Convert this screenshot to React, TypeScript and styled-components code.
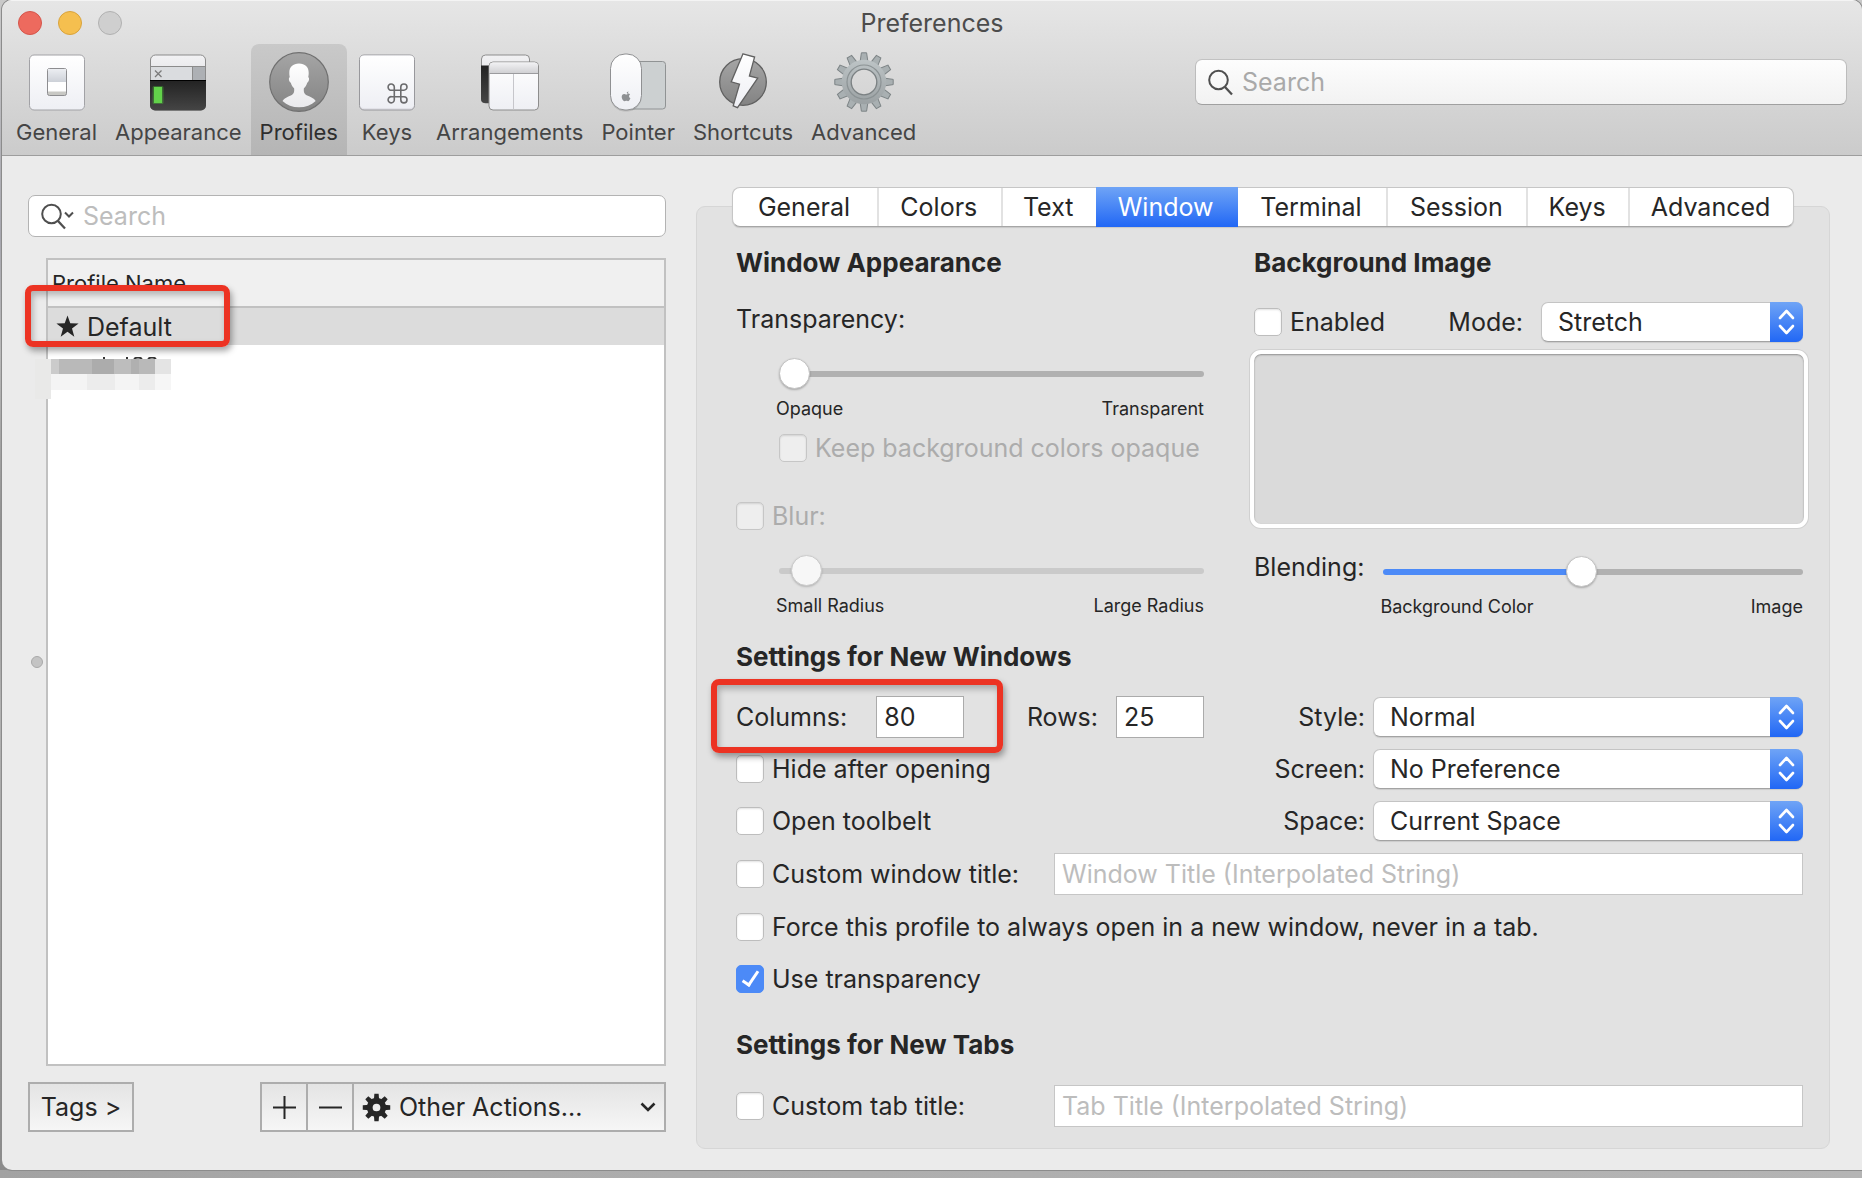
import React, { useId, useState } from "react";
import styled, { createGlobalStyle, css } from "styled-components";

const color = {
  text: "#262626",
  muted: "#acacac",
  placeholder: "#bdbdbd",
  blue: "#4c8af7",
  red: "#ec3323",
  line: "#c1c1c1",
};
const font = { heading: "26px", base: "25px", tool: "22px", small: "18px" };
const blueFill = "linear-gradient(#6fa4f6, #2167f5)";

const GlobalStyle = createGlobalStyle`
  *, *::before, *::after { box-sizing: border-box; }
  body {
    margin: 0;
    background: #acacac;
    color: ${color.text};
    font-family: Inter, Roboto, "Liberation Sans", sans-serif;
    font-size: ${font.base};
    line-height: 30px;
  }
  button, input, select { font: inherit; color: inherit; margin: 0; }
`;

/* ---------- window frame ---------- */

const Desktop = styled.div`
  min-height: 100vh;
  display: flex;
  padding: 0 0 8px 2px;
  background:
    linear-gradient(90deg, #a2a2a2, #acacac 28%, #b4b4b4) bottom / 100% 8px no-repeat,
    linear-gradient(#c9c9c9, #a6a6ae 20%, #b9b9b9 30%, #8f8f8f 45%, #b2b2b2 60%, #8a8a8a);
`;

const PreferencesWindow = styled.main`
  flex: 1;
  display: flex;
  flex-direction: column;
  background: #ebebeb;
  border-radius: 10px 10px 0 10px;
  box-shadow: 0 0 0 1px #8c8c8c;
  overflow: hidden;
`;

const Header = styled.header`
  background: linear-gradient(#e6e6e6, #cbcbcb);
  border-top: 1px solid #f4f4f4;
  border-bottom: 1px solid #9d9d9d;
`;

const TitleBar = styled.div`
  display: grid;
  grid-template-columns: 1fr auto 1fr;
  align-items: center;
  height: 43px;
  padding: 0 16px;
`;

const Lights = styled.div`
  display: flex;
  gap: 16px;
`;

const Light = styled.button<{ $fill: string; $edge: string }>`
  width: 24px;
  height: 24px;
  padding: 0;
  border: 1px solid ${(p) => p.$edge};
  border-radius: 50%;
  background: ${(p) => p.$fill};
`;

const Title = styled.h1`
  margin: 0;
  font-size: ${font.base};
  font-weight: 400;
  color: #4c4c4c;
`;

const Toolbar = styled.div`
  display: flex;
  justify-content: space-between;
  gap: 24px;
  height: 111px;
  padding: 0 15px 0 5px;
`;

const Tools = styled.nav`
  display: flex;
`;

const Tool = styled.button<{ $active?: boolean }>`
  display: flex;
  flex-direction: column;
  align-items: center;
  gap: 6px;
  min-width: 80px;
  padding: 8px 9px 0;
  border: 0;
  border-radius: 8px 8px 0 0;
  background: ${(p) => (p.$active ? "linear-gradient(#c9c9c9, #b5b5b5)" : "none")};
  color: ${(p) => (p.$active ? "#2e2e2e" : "#454545")};
  font-size: ${font.tool};
  line-height: 28px;

  svg {
    width: 60px;
    height: 60px;
    flex: none;
  }
`;

const SearchBox = styled.label<{ $toolbar?: boolean }>`
  display: flex;
  align-items: center;
  gap: 8px;
  height: 42px;
  padding: 0 12px;
  border: 1px solid #b3b3b3;
  border-radius: 7px;
  background: #fff;

  ${(p) =>
    p.$toolbar &&
    css`
      flex: 0 1 652px;
      height: 46px;
      margin-top: 15px;
      border-color: #c2c2c2 #bcbcbc #a0a0a0;
      background: linear-gradient(#fdfdfd, #f2f2f2);
    `}

  svg {
    flex: none;
  }
  input {
    flex: 1;
    min-width: 0;
    padding: 0;
    border: 0;
    outline: 0;
    background: none;
  }
  input::placeholder {
    color: ${(p) => (p.$toolbar ? "#a9a9a9" : color.placeholder)};
    opacity: 1;
  }
`;

const Body = styled.div`
  flex: 1;
  display: flex;
  gap: 30px;
  padding: 31px 32px 21px 26px;
`;

/* ---------- profile list ---------- */

const Sidebar = styled.aside`
  flex: 0 0 638px;
  display: flex;
  flex-direction: column;
  padding: 8px 0 17px;
`;

const ListArea = styled.div`
  flex: 1;
  display: flex;
  align-items: stretch;
  gap: 3px;
  margin: 21px 0 16px;
`;

const Splitter = styled.div`
  display: flex;
  align-items: center;
  padding-left: 3px;

  &::before {
    content: "";
    width: 12px;
    height: 12px;
    border-radius: 50%;
    border: 1px solid #a9a9a9;
    background: #c4c4c4;
  }
`;

const ListFrame = styled.div`
  position: relative;
  flex: 1;
  border: 2px solid ${color.line};
  background: #fff;
`;

const ProfileTable = styled.table`
  width: 100%;
  border-collapse: collapse;

  th {
    height: 47px;
    padding: 0 4px;
    border-bottom: 2px solid ${color.line};
    background: #f0f0f0;
    font-size: ${font.tool};
    font-weight: 400;
    text-align: left;
  }
  td {
    height: 38px;
    padding: 0 8px;
  }
`;

const ProfileRow = styled.tr<{ $selected?: boolean }>`
  background: ${(p) => (p.$selected ? "#dcdcdc" : "none")};
`;

const ProfileName = styled.span`
  display: flex;
  align-items: center;
  gap: 8px;
`;

const RedactedCell = styled.td`
  position: relative;

  svg {
    position: absolute;
    left: -13px;
    top: 12px;
  }
`;

const Highlight = styled.span`
  position: absolute;
  border: 6px solid ${color.red};
  border-radius: 8px;
  box-shadow: 2px 4px 6px rgba(0, 0, 0, 0.35), inset 2px 4px 6px rgba(0, 0, 0, 0.25);
  pointer-events: none;
`;

const ProfileHighlight = styled(Highlight)`
  left: -23px;
  top: 25px;
  width: 205px;
  height: 62px;
`;

const ColumnsHighlight = styled(Highlight)`
  inset: -17px -39px -15px -25px;
`;

const ListActions = styled.div`
  display: flex;
  justify-content: space-between;
`;

const ButtonGroup = styled.div`
  display: flex;
`;

const SquareButton = styled.button<{ $width: number }>`
  display: flex;
  align-items: center;
  justify-content: center;
  gap: 8px;
  width: ${(p) => p.$width}px;
  height: 50px;
  padding: 0 8px;
  border: 2px solid #adadad;
  background: linear-gradient(#e4e4e4, #f6f6f6);
  white-space: nowrap;

  & + & {
    margin-left: -2px;
  }
`;

const Grow = styled.span`
  flex: 1;
  text-align: left;
`;

/* ---------- settings pane ---------- */

const Pane = styled.section`
  flex: 1;
  min-width: 0;
  display: flex;
  flex-direction: column;
`;

const Tabs = styled.div`
  position: relative;
  display: grid;
  grid-template-columns: 144fr 124fr 95fr 142fr 149fr 140fr 102fr 165fr;
  height: 40px;
  margin: 0 36px;
  border: 1px solid #c6c6c6;
  border-bottom-color: #a6a6a6;
  border-radius: 8px;
  background: #fff;
  box-shadow: 0 1px 1px rgba(0, 0, 0, 0.12);
`;

const Tab = styled.button<{ $active?: boolean }>`
  padding: 0 2px 0 0;
  border: 0;
  border-left: 2px solid #e2e2e2;
  background: none;

  &:first-child {
    border-left: 0;
  }
  ${(p) =>
    p.$active &&
    css`
      margin: -1px 0;
      border-left: 0;
      background: ${blueFill};
      color: #fff;

      & + button {
        border-left: 0;
      }
    `}
`;

const Panel = styled.div`
  flex: 1;
  margin-top: -21px;
  padding: 41px 26px 20px 39px;
  border: 1px solid #d6d6d6;
  border-radius: 9px;
  background: #e2e2e2;
`;

const Columns = styled.div`
  display: grid;
  grid-template-columns: 468fr 549fr;
  column-gap: 50px;
`;

const Stack = styled.div`
  display: flex;
  flex-direction: column;
`;

const Heading = styled.h2`
  margin: 0;
  font-size: ${font.heading};
  font-weight: 700;
`;

const FieldLabel = styled.label`
  white-space: nowrap;
`;

const TransparencyLabel = styled(FieldLabel)`
  margin-top: 26px;
`;

const Indented = styled.div`
  display: grid;
  gap: 12px;
  margin: 24px 0 38px 43px;
`;

const BlurRadius = styled.div`
  margin: 24px 0 24px 43px;
`;

const SliderBlock = styled.div`
  flex: 1;
  display: grid;
  gap: 7px;
`;

const SliderEnds = styled.div`
  display: flex;
  justify-content: space-between;
  margin-left: -3px;
  font-size: ${font.small};
  line-height: 24px;
`;

const Range = styled.input<{ $filled?: boolean }>`
  appearance: none;
  width: auto;
  height: 32px;
  margin: 0;
  background: none;
  opacity: ${(p) => (p.disabled ? 0.75 : 1)};

  &::-webkit-slider-runnable-track {
    height: 6px;
    border-radius: 3px;
    background: ${(p) =>
      p.$filled
        ? `linear-gradient(90deg, ${color.blue} var(--fill), #b1b1b1 var(--fill))`
        : p.disabled
          ? "#c2c2c2"
          : "#b1b1b1"};
  }
  &::-webkit-slider-thumb {
    appearance: none;
    width: 31px;
    height: 31px;
    margin-top: -13px;
    border: 1px solid #c4c4c4;
    border-radius: 50%;
    background: #fff;
    box-shadow: 0 1px 2px rgba(0, 0, 0, 0.25);
  }
`;

const CheckLabel = styled.label<{ $dim?: boolean }>`
  display: flex;
  align-items: center;
  gap: 8px;
  white-space: nowrap;
  color: ${(p) => (p.$dim ? color.muted : "inherit")};
`;

const Box = styled.input`
  appearance: none;
  display: grid;
  place-items: center;
  flex: none;
  width: 28px;
  height: 28px;
  border: 1px solid #bdbdbd;
  border-radius: 5px;
  background: #fff;
  box-shadow: inset 0 1px 2px rgba(0, 0, 0, 0.12);

  &:disabled {
    background: #eeeeee;
    border-color: #c6c6c6;
  }
  &:checked {
    border-color: ${color.blue};
    background: ${color.blue};
    box-shadow: none;
  }
  &:checked::after {
    content: "";
    width: 9px;
    height: 18px;
    margin-bottom: 4px;
    border: solid #fff;
    border-width: 0 3px 3px 0;
    transform: rotate(34deg);
  }
`;

const BackgroundRow = styled.div`
  display: flex;
  align-items: center;
  gap: 18px;
  margin-top: 24px;
`;

const ModeLabel = styled(FieldLabel)`
  margin-left: auto;
`;

const SelectFrame = styled.span<{ $width?: number }>`
  display: grid;
  height: 40px;
  ${(p) => (p.$width ? `width: ${p.$width}px;` : "flex: 1;")}

  select {
    grid-area: 1 / 1;
    appearance: none;
    min-width: 0;
    padding: 0 40px 0 16px;
    border: 1px solid #c4c4c4;
    border-bottom-color: #a3a3a3;
    border-radius: 7px;
    background: #fff;
    box-shadow: 0 1px 1px rgba(0, 0, 0, 0.1);
  }
`;

const SelectCap = styled.span`
  grid-area: 1 / 1;
  z-index: 1;
  justify-self: end;
  display: grid;
  place-items: center;
  width: 33px;
  border-radius: 0 7px 7px 0;
  background: ${blueFill};
  pointer-events: none;
`;

const ImageWell = styled.div`
  height: 178px;
  margin: 8px -5px 24px -4px;
  border: 4px solid #fff;
  border-radius: 11px;
  background: #dadada;
  box-shadow: 0 0 0 1px #d0d0d0, inset 0 1px 2px rgba(0, 0, 0, 0.35);
`;

const BlendingRow = styled.div`
  display: flex;
  gap: 19px;
  padding-top: 4px;

  label {
    margin-top: -4px;
  }
`;

const Rows = styled.div`
  display: flex;
  flex-direction: column;
  gap: 10px;
`;

const Row = styled.div<{ $between?: boolean }>`
  display: flex;
  align-items: center;
  justify-content: ${(p) => (p.$between ? "space-between" : "flex-start")};
  min-height: 42px;
`;

const TitleRow = styled.div`
  display: grid;
  grid-template-columns: 318px 1fr;
  align-items: center;
  min-height: 44px;
`;

const WindowSettings = styled(Rows)`
  margin: 24px 0 30px;
`;

const TabSettings = styled(Rows)`
  margin-top: 24px;
`;

const SizeField = styled.div<{ $gap: number }>`
  position: relative;
  display: flex;
  align-items: center;
  gap: ${(p) => p.$gap}px;
`;

const TextInput = styled.input<{ $narrow?: boolean }>`
  width: ${(p) => (p.$narrow ? "88px" : "100%")};
  height: 42px;
  padding: 0 7px;
  border: 1px solid ${(p) => (p.$narrow ? "#ababab" : "#c6c6c6")};
  border-radius: 0;
  outline: 0;
  background: #fff;

  &::placeholder {
    color: ${color.placeholder};
    opacity: 1;
  }
`;

const PopupRow = styled.div`
  display: grid;
  grid-template-columns: 111px 1fr;
  align-items: center;
  column-gap: 8px;
  min-height: 42px;

  label {
    text-align: right;
  }
`;

/* ---------- drawings ---------- */

const GeneralIcon = () => (
  <svg viewBox="0 0 60 60" aria-hidden="true">
    <defs>
      <linearGradient id="key" x2="0" y2="1">
        <stop offset="0" stopColor="#fff" />
        <stop offset="1" stopColor="#eeeff4" />
      </linearGradient>
      <linearGradient id="rocker" x2="0" y2="1">
        <stop offset="0" stopColor="#eceef2" />
        <stop offset="1" stopColor="#cdd1d8" />
      </linearGradient>
    </defs>
    <rect x="2.5" y="3" width="55" height="55" rx="4.5" fill="url(#key)" stroke="#a2a2a6" />
    <rect x="20.5" y="16.500" width="19" height="27" rx="2" fill="#c8c8c4" stroke="#8d8d90" />
    <path d="M21 17h18v13H21z" fill="url(#rocker)" />
    <path d="M21 30h18v9.500H21z" fill="#fff" />
  </svg>
);

const AppearanceIcon = () => (
  <svg viewBox="0 0 60 60" aria-hidden="true">
    <defs>
      <linearGradient id="bar" x2="0" y2="1">
        <stop offset="0" stopColor="#f2f2f4" />
        <stop offset="1" stopColor="#cfcfd2" />
      </linearGradient>
      <linearGradient id="screen" x2="0" y2="1">
        <stop offset="0" stopColor="#222" />
        <stop offset="1" stopColor="#454545" />
      </linearGradient>
    </defs>
    <rect x="2.500" y="3" width="55" height="55" rx="5" fill="url(#bar)" stroke="#8b8b8b" />
    <path d="M3 14.500h41.500v14H3z" fill="#dadcdf" />
    <path d="M44.500 14.500H57v14H44.500z" fill="#adb0b4" />
    <path d="M3 14.500h54M44.500 14.500v14" stroke="#8b8b8b" />
    <path d="M2 28h56v25.500a5 5 0 0 1-5 5H7a5 5 0 0 1-5-5z" fill="url(#screen)" />
    <path d="M2 28.500h56" stroke="#000" />
    <path d="M7 18.500l6.500 6.500M13.500 18.500L7 25" stroke="#7a7a7a" strokeWidth="1.300" />
    <rect x="4.500" y="34" width="11" height="18" rx="1.500" fill="#4fd33a" opacity=".35" />
    <rect x="6" y="35" width="8" height="16" fill="#62d24a" />
  </svg>
);

const ProfilesIcon = () => (
  <svg viewBox="0 0 60 60" aria-hidden="true">
    <defs>
      <linearGradient id="disc" x2="0" y2="1">
        <stop offset="0" stopColor="#a5a5a5" />
        <stop offset="1" stopColor="#838383" />
      </linearGradient>
      <linearGradient id="bust" x2="0" y2="1">
        <stop offset="0" stopColor="#fff" />
        <stop offset="1" stopColor="#e9e9ec" />
      </linearGradient>
    </defs>
    <circle cx="30" cy="30" r="29.300" fill="url(#disc)" stroke="#707070" strokeWidth="1.200" />
    <path
      d="M30 11.500c-6 0-9.700 3.500-9.700 9.200 0 2 .2 3.300.5 4.600-1.600.2-.9 4.800 1 5.400.7 2.500 1.800 4.300 3.300 5.600.4 3.700-.2 5.700-3.300 7.300-3.300 1.600-6.400 2.500-8.300 5.400 4.400 4.200 10 6.300 16.500 6.300s12.300-2.100 16.700-6.300c-1.900-2.900-5.200-3.800-8.500-5.400-3.100-1.600-3.700-3.600-3.300-7.300 1.500-1.300 2.600-3.100 3.300-5.600 1.900-.6 2.600-5.200 1-5.400.3-1.300.5-2.600.5-4.600 0-5.700-3.700-9.200-9.700-9.200z"
      fill="url(#bust)"
    />
  </svg>
);

const KeysIcon = () => (
  <svg viewBox="0 0 60 60" aria-hidden="true">
    <rect x="2.500" y="3" width="55" height="55" rx="4.500" fill="#e2e2e8" stroke="#98989c" />
    <rect x="3" y="3.500" width="54" height="52.500" rx="4" fill="url(#key)" />
    <path
      d="M37.300 38.200h6.500v6.500h-6.500zM37.300 38.200h-2.700a3.100 3.100 0 1 1 2.700-3.100zM43.800 38.200v-3.100a3.100 3.100 0 1 1 3.100 3.100zM43.800 44.700h3.100a3.100 3.100 0 1 1-3.100 3.100zM37.300 44.700v3.100a3.100 3.100 0 1 1-2.700-3.100z"
      fill="none"
      stroke="#6b6b6d"
      strokeWidth="1.600"
    />
  </svg>
);

const ArrangementsIcon = () => (
  <svg viewBox="0 0 60 60" aria-hidden="true">
    <rect x="1.500" y="3" width="48" height="48" rx="4" fill="url(#bar)" stroke="#8d8d8d" />
    <path d="M1 13.500h20V51H5a4 4 0 0 1-4-4z" fill="url(#screen)" />
    <rect x="9" y="10" width="49.500" height="48" rx="4" fill="url(#key)" stroke="#8d8d8d" />
    <path d="M9.500 21.500V14a3.500 3.500 0 0 1 3.500-3.500h41.500A3.500 3.500 0 0 1 58 14v7.500z" fill="url(#bar)" />
    <path d="M9.500 21.500H58" stroke="#9b9b9e" />
    <path d="M33.500 22v35.500" stroke="#c6c6cb" />
  </svg>
);

const PointerIcon = () => (
  <svg viewBox="0 0 60 60" aria-hidden="true">
    <rect x="18" y="9.500" width="39.500" height="47.500" rx="3" fill="#ccd0d1" stroke="#909394" />
    <rect x="2.500" y="2.500" width="31" height="57" rx="14.500" fill="#000" opacity=".12" />
    <rect x="2.500" y="2" width="31" height="56" rx="14.500" fill="url(#key)" stroke="#8f9092" />
    <path
      d="M20.300 43.600c.2-.9-.2-1.700-.7-2.300.7 0 1.300-.3 1.700-1 .2.700-.2 1.700-.8 2.200 1.300-.1 2.200.4 2.500 1-1.400.9-1.200 3.100.4 3.700-.5 1.500-1.500 3-2.400 3-.7 0-1-.4-1.800-.4s-1.100.4-1.800.4c-1.500-.1-3-3-2.600-5.100.4-2 2-2.500 3.200-1.900.8.300 1.300.3 2.300.4z"
      transform="translate(-1 -1)"
      fill="#8e9093"
    />
  </svg>
);

const ShortcutsIcon = () => (
  <svg viewBox="0 0 60 60" aria-hidden="true">
    <circle cx="30" cy="30" r="23.300" fill="url(#disc)" stroke="#606060" strokeWidth="1.300" />
    <path
      d="M30 1.800L41.600 5l-5.200 19 8.300 2.200L24.500 55.600l-4.300-1.700 6.300-21.800-8.300-2.200z"
      fill="url(#key)"
      stroke="#616161"
      strokeWidth="1.300"
      strokeLinejoin="miter"
    />
  </svg>
);

const spokes = (count: number) => Array.from({ length: count }, (_, i) => (360 / count) * i);

const AdvancedIcon = () => (
  <svg viewBox="0 0 60 60" aria-hidden="true">
    <defs>
      <linearGradient id="steel" gradientUnits="userSpaceOnUse" x1="0" y1="0" x2="0" y2="60">
        <stop offset="0" stopColor="#c3cacc" />
        <stop offset="1" stopColor="#959b9d" />
      </linearGradient>
    </defs>
    {spokes(12).map((angle) => (
      <path
        key={angle}
        d="M26 10.500L27.400 .8h5.200L34 10.500z"
        transform={`rotate(${angle} 30 30)`}
        fill="#a9b0b2"
        stroke="#7d8486"
      />
    ))}
    <circle cx="30" cy="30" r="17.500" fill="none" stroke="url(#steel)" strokeWidth="9.500" />
    <circle cx="30" cy="30" r="17" fill="none" stroke="#8b9294" strokeWidth="1.200" />
    <circle cx="30" cy="30" r="12.800" fill="none" stroke="#7b8183" strokeWidth="1.300" />
  </svg>
);

const Magnifier = ({ menu = false }: { menu?: boolean }) => (
  <svg width={menu ? 34 : 26} height="28" viewBox={menu ? "0 0 34 28" : "0 0 26 28"} fill="none" stroke="#4f4f4f" strokeWidth="2" aria-hidden="true">
    <circle cx="10.500" cy="12" r="9.300" />
    <path d="M17 19l7 7.500" strokeWidth="2.300" />
    {menu && <path d="M24 10.500l4 4 4-4" />}
  </svg>
);

const Star = () => (
  <svg width="23" height="23" viewBox="0 0 24 24" fill={color.text} aria-hidden="true">
    <path d="M12 .5l2.900 8.200 8.700.2-6.900 5.300 2.400 8.400L12 17.600l-7.100 5 2.400-8.400L.4 8.900l8.700-.2z" />
  </svg>
);

const blocks: [number, number, number, number, string][] = [
  [0, 2, 16, 40, "#e9e9e8"],
  [16, 2, 8, 15, "#cbcbcb"],
  [24, 2, 33, 15, "#b9b9b9"],
  [57, 2, 22, 15, "#acacac"],
  [79, 2, 17, 15, "#bdbdbd"],
  [96, 2, 8, 15, "#b0b0b0"],
  [104, 2, 16, 15, "#b9b9b9"],
  [120, 2, 16, 15, "#e4e4e4"],
  [16, 17, 36, 16, "#f4f4f4"],
  [52, 17, 28, 16, "#ececec"],
  [80, 17, 24, 16, "#f4f4f4"],
  [104, 17, 16, 16, "#ececec"],
  [120, 17, 16, 16, "#f6f6f6"],
];

const Mosaic = () => (
  <svg width="136" height="44" viewBox="0 0 136 44" role="img" aria-label="Redacted profile">
    <path d="M69 0v2M92 0v2M99 2q4-3 8 0M113 2q4-3 8 0" fill="none" stroke="#333" strokeWidth="2" />
    {blocks.map(([x, y, w, h, fill]) => (
      <rect key={`${x}-${y}`} x={x} y={y} width={w} height={h} fill={fill} />
    ))}
  </svg>
);

const SmallGear = () => (
  <svg width="29" height="29" viewBox="0 0 30 30" fill={color.text} aria-hidden="true">
    {spokes(8).map((angle) => (
      <path key={angle} d="M12.200 8L12.800 .8h4.400L17.800 8z" transform={`rotate(${angle} 15 15)`} />
    ))}
    <circle cx="15" cy="15" r="7" fill="none" stroke={color.text} strokeWidth="6" />
  </svg>
);

const Plus = () => (
  <svg width="23" height="23" viewBox="0 0 23 23" stroke={color.text} strokeWidth="2" aria-hidden="true">
    <path d="M0 11.500h23M11.500 0v23" />
  </svg>
);

const Minus = () => (
  <svg width="23" height="23" viewBox="0 0 23 23" stroke={color.text} strokeWidth="2" aria-hidden="true">
    <path d="M0 11.500h23" />
  </svg>
);

const ChevronDown = () => (
  <svg width="16" height="10" viewBox="0 0 16 10" fill="none" stroke={color.text} strokeWidth="2.600" aria-hidden="true">
    <path d="M1.500 1.500L8 8l6.500-6.500" />
  </svg>
);

const UpDown = () => (
  <svg width="17" height="26" viewBox="0 0 17 26" fill="none" stroke="#fff" strokeWidth="2.600" strokeLinecap="round" strokeLinejoin="round" aria-hidden="true">
    <path d="M2 9l6.500-7L15 9M2 17l6.500 7L15 17" />
  </svg>
);

/* ---------- controls ---------- */

type CheckProps = { label: string; checked?: boolean; disabled?: boolean };

const Check = ({ label, checked = false, disabled }: CheckProps) => {
  const [on, setOn] = useState(checked);
  return (
    <CheckLabel $dim={disabled}>
      <Box type="checkbox" checked={on} disabled={disabled} onChange={() => setOn(!on)} />
      {label}
    </CheckLabel>
  );
};

type SliderProps = {
  id?: string;
  name?: string;
  low: string;
  high: string;
  start: number;
  filled?: boolean;
  disabled?: boolean;
};

const Slider = ({ id, name, low, high, start, filled, disabled }: SliderProps) => {
  const [value, setValue] = useState(start);
  return (
    <SliderBlock>
      <Range
        id={id}
        aria-label={name}
        type="range"
        value={value}
        disabled={disabled}
        $filled={filled}
        style={{ "--fill": `${value}%` } as React.CSSProperties}
        onChange={(e) => setValue(Number(e.target.value))}
      />
      <SliderEnds>
        <span>{low}</span>
        <span>{high}</span>
      </SliderEnds>
    </SliderBlock>
  );
};

const Select = ({ id, option, width }: { id: string; option: string; width?: number }) => (
  <SelectFrame $width={width}>
    <select id={id}>
      <option>{option}</option>
    </select>
    <SelectCap>
      <UpDown />
    </SelectCap>
  </SelectFrame>
);

const Popup = ({ label, option }: { label: string; option: string }) => {
  const id = useId();
  return (
    <PopupRow>
      <FieldLabel htmlFor={id}>{label}</FieldLabel>
      <Select id={id} option={option} />
    </PopupRow>
  );
};

const tools = [
  { label: "General", Icon: GeneralIcon },
  { label: "Appearance", Icon: AppearanceIcon },
  { label: "Profiles", Icon: ProfilesIcon },
  { label: "Keys", Icon: KeysIcon },
  { label: "Arrangements", Icon: ArrangementsIcon },
  { label: "Pointer", Icon: PointerIcon },
  { label: "Shortcuts", Icon: ShortcutsIcon },
  { label: "Advanced", Icon: AdvancedIcon },
];

const tabs = ["General", "Colors", "Text", "Window", "Terminal", "Session", "Keys", "Advanced"];

export default function App() {
  return (
    <>
      <GlobalStyle />
      <Desktop>
        <PreferencesWindow>
          <Header>
            <TitleBar>
              <Lights>
                <Light aria-label="Close" $fill="#ed6a5e" $edge="#d5554b" />
                <Light aria-label="Minimize" $fill="#f5bf4f" $edge="#d9a33c" />
                <Light aria-label="Zoom" $fill="#cfcfcf" $edge="#b1b1b1" />
              </Lights>
              <Title>Preferences</Title>
            </TitleBar>
            <Toolbar>
              <Tools>
                {tools.map(({ label, Icon }) => (
                  <Tool key={label} $active={label === "Profiles"}>
                    <Icon />
                    {label}
                  </Tool>
                ))}
              </Tools>
              <SearchBox $toolbar>
                <Magnifier />
                <input type="text" placeholder="Search" aria-label="Search preferences" />
              </SearchBox>
            </Toolbar>
          </Header>

          <Body>
            <Sidebar>
              <SearchBox>
                <Magnifier menu />
                <input type="text" placeholder="Search" aria-label="Search profiles" />
              </SearchBox>
              <ListArea>
                <Splitter />
                <ListFrame>
                  <ProfileTable>
                    <thead>
                      <tr>
                        <th scope="col">Profile Name</th>
                      </tr>
                    </thead>
                    <tbody>
                      <ProfileRow $selected>
                        <td>
                          <ProfileName>
                            <Star />
                            Default
                          </ProfileName>
                        </td>
                      </ProfileRow>
                      <ProfileRow>
                        <RedactedCell>
                          <Mosaic />
                        </RedactedCell>
                      </ProfileRow>
                    </tbody>
                  </ProfileTable>
                  <ProfileHighlight />
                </ListFrame>
              </ListArea>
              <ListActions>
                <SquareButton $width={106}>Tags &gt;</SquareButton>
                <ButtonGroup>
                  <SquareButton $width={48} aria-label="Add profile">
                    <Plus />
                  </SquareButton>
                  <SquareButton $width={48} aria-label="Remove profile">
                    <Minus />
                  </SquareButton>
                  <SquareButton $width={314} aria-haspopup="menu">
                    <SmallGear />
                    <Grow>Other Actions...</Grow>
                    <ChevronDown />
                  </SquareButton>
                </ButtonGroup>
              </ListActions>
            </Sidebar>

            <Pane>
              <Tabs role="tablist">
                {tabs.map((tab) => (
                  <Tab key={tab} role="tab" aria-selected={tab === "Window"} $active={tab === "Window"}>
                    {tab}
                  </Tab>
                ))}
              </Tabs>
              <Panel role="tabpanel">
                <Columns>
                  <Stack>
                    <Heading>Window Appearance</Heading>
                    <TransparencyLabel htmlFor="transparency">Transparency:</TransparencyLabel>
                    <Indented>
                      <Slider id="transparency" low="Opaque" high="Transparent" start={0} />
                      <Check label="Keep background colors opaque" disabled />
                    </Indented>
                    <Check label="Blur:" disabled />
                    <BlurRadius>
                      <Slider name="Blur radius" low="Small Radius" high="Large Radius" start={3} disabled />
                    </BlurRadius>
                  </Stack>
                  <Stack>
                    <Heading>Background Image</Heading>
                    <BackgroundRow>
                      <Check label="Enabled" />
                      <ModeLabel htmlFor="mode">Mode:</ModeLabel>
                      <Select id="mode" option="Stretch" width={262} />
                    </BackgroundRow>
                    <ImageWell />
                    <BlendingRow>
                      <FieldLabel htmlFor="blending">Blending:</FieldLabel>
                      <Slider id="blending" low="Background Color" high="Image" start={47} filled />
                    </BlendingRow>
                  </Stack>
                </Columns>

                <Heading>Settings for New Windows</Heading>
                <WindowSettings>
                  <Columns>
                    <Rows>
                      <Row $between>
                        <SizeField $gap={29}>
                          <FieldLabel htmlFor="columns">Columns:</FieldLabel>
                          <TextInput $narrow id="columns" type="text" defaultValue="80" />
                          <ColumnsHighlight />
                        </SizeField>
                        <SizeField $gap={18}>
                          <FieldLabel htmlFor="rows">Rows:</FieldLabel>
                          <TextInput $narrow id="rows" type="text" defaultValue="25" />
                        </SizeField>
                      </Row>
                      <Row>
                        <Check label="Hide after opening" />
                      </Row>
                      <Row>
                        <Check label="Open toolbelt" />
                      </Row>
                    </Rows>
                    <Rows>
                      <Popup label="Style:" option="Normal" />
                      <Popup label="Screen:" option="No Preference" />
                      <Popup label="Space:" option="Current Space" />
                    </Rows>
                  </Columns>
                  <TitleRow>
                    <Check label="Custom window title:" />
                    <TextInput type="text" aria-label="Custom window title" placeholder="Window Title (Interpolated String)" />
                  </TitleRow>
                  <Row>
                    <Check label="Force this profile to always open in a new window, never in a tab." />
                  </Row>
                  <Row>
                    <Check label="Use transparency" checked />
                  </Row>
                </WindowSettings>

                <Heading>Settings for New Tabs</Heading>
                <TabSettings>
                  <TitleRow>
                    <Check label="Custom tab title:" />
                    <TextInput type="text" aria-label="Custom tab title" placeholder="Tab Title (Interpolated String)" />
                  </TitleRow>
                </TabSettings>
              </Panel>
            </Pane>
          </Body>
        </PreferencesWindow>
      </Desktop>
    </>
  );
}
